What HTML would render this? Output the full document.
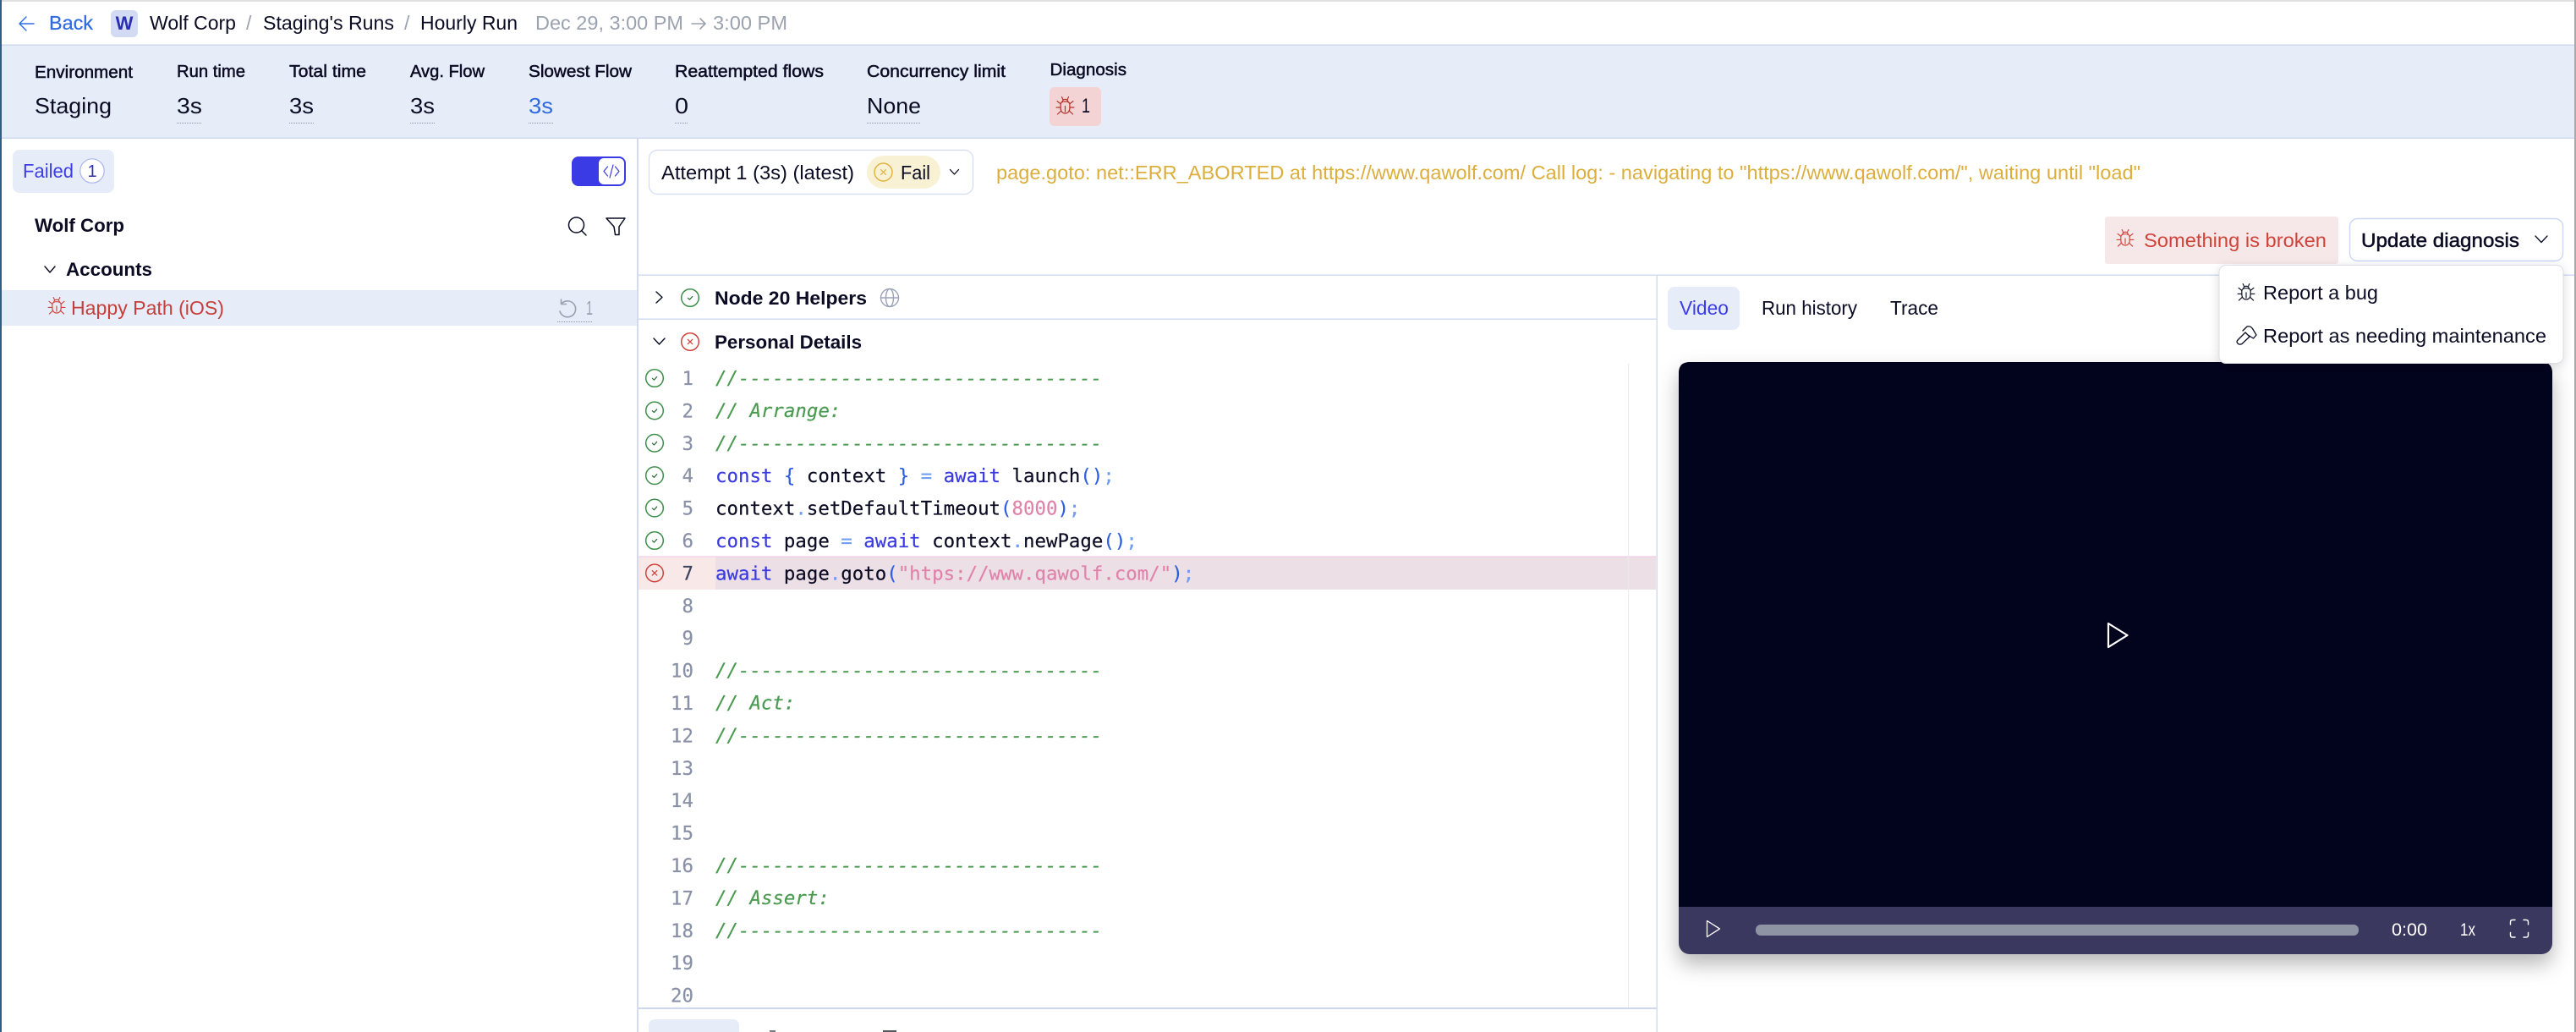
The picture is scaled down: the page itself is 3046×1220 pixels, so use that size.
<!DOCTYPE html>
<html lang="en">
<head>
<meta charset="utf-8">
<title>Hourly Run</title>
<style>
html,body{margin:0;padding:0;background:#fff;width:3046px;height:1220px;overflow:hidden}
svg{display:block}
text{font-family:"Liberation Sans",sans-serif;font-size:23px;fill:#0b0b23;white-space:pre}
.m{stroke:#0b0b23;stroke-width:.5px}
.b{font-weight:bold;font-size:22.5px}
.l{font-size:20px;stroke:#0b0b23;stroke-width:.5px}
.v{font-size:26px}
.c{font-family:"DejaVu Sans Mono",monospace;font-size:22.4px;stroke:#0b0b23;stroke-width:.2px}
.n{fill:#8a91a6;stroke:#8a91a6;text-anchor:end}
.g{fill:#4a9a50;stroke:#4a9a50}
.i{font-style:italic}
.k{fill:#3a3ae0;stroke:#3a3ae0}
.p{fill:#2f5fe0;stroke:#2f5fe0}
.q{fill:#6f9df2;stroke:#6f9df2}
.s{fill:#e083aa;stroke:#e083aa}
.ic{fill:none;stroke:currentColor;stroke-width:1.2;stroke-linecap:round;stroke-linejoin:round}
</style>
</head>
<body>
<svg width="3046" height="1220" viewBox="0 0 3046 1220" xmlns="http://www.w3.org/2000/svg">
<defs>
<symbol id="bug" viewBox="0 0 22 22" overflow="visible">
<g class="ic">
<path d="M5.6 9.5C5.6 7.2 7.5 6 11 6S16.4 7.2 16.4 9.5V14C16.4 17.6 14 20 11 20S5.6 17.6 5.6 14Z"/>
<path d="M11 11.5V18M7.6 6.5C7.6 4.6 9.2 3.4 11 3.4S14.4 4.6 14.4 6.5M7 .6L8.6 4M15 .6L13.4 4M5.6 8.8L1.6 5.6M16.4 8.8L20.4 5.6M5.6 13H.6M16.4 13H21.4M6.2 17L2 21M15.8 17L20 21"/>
</g>
</symbol>
<symbol id="ok" viewBox="0 0 22 22" overflow="visible">
<circle cx="11" cy="11" r="10.3" fill="none" stroke="#3d8f4a" stroke-width="1.5"/>
<path d="M8.4 11.3L10.4 13.2L13.7 9.5" fill="none" stroke="#2f6f3a" stroke-width="1.25" stroke-linecap="round" stroke-linejoin="round"/>
</symbol>
<symbol id="bad" viewBox="0 0 22 22" overflow="visible">
<circle cx="11" cy="11" r="10.3" fill="none" stroke="#d0433b" stroke-width="1.5"/>
<path d="M8.3 8.3L13.7 13.7M13.7 8.3L8.3 13.7" fill="none" stroke="#d0433b" stroke-width="1.25" stroke-linecap="round"/>
</symbol>
<filter id="sh1" x="-10%" y="-10%" width="120%" height="125%"><feDropShadow dx="0" dy="12" stdDeviation="12" flood-color="#000" flood-opacity=".28"/></filter>
<filter id="sh2" x="-10%" y="-20%" width="120%" height="150%"><feDropShadow dx="0" dy="3" stdDeviation="6" flood-color="#000" flood-opacity=".14"/></filter>
</defs>

<!-- window edges -->
<rect x="0" y="0" width="3046" height="2" fill="#e0e0e0"/>

<!-- header -->
<path d="M31 20L23 28L31 36M23 28H40" fill="none" stroke="#2f6be0" stroke-width="1.4" stroke-linecap="round" stroke-linejoin="round"/>
<text x="58" y="35" textLength="52" lengthAdjust="spacingAndGlyphs" style="fill:#2f6be0;stroke:#2f6be0;stroke-width:.25px">Back</text>
<rect x="131" y="12" width="32" height="32" rx="6" fill="#d3daf3"/>
<text x="147" y="35" text-anchor="middle" class="b" style="fill:#2a2fb0;font-size:22px">W</text>
<text x="177" y="35" textLength="102" lengthAdjust="spacingAndGlyphs">Wolf Corp</text>
<text x="291" y="35" style="fill:#9aa1af">/</text>
<text x="311" y="35" textLength="155" lengthAdjust="spacingAndGlyphs">Staging's Runs</text>
<text x="478" y="35" style="fill:#9aa1af">/</text>
<text x="497" y="35" textLength="115" lengthAdjust="spacingAndGlyphs">Hourly Run</text>
<text x="633" y="35" textLength="175" lengthAdjust="spacingAndGlyphs" style="fill:#9ba2b0">Dec 29, 3:00 PM</text>
<path d="M818 28H834M828 22L834 28L828 34" fill="none" stroke="#9ba2b0" stroke-width="1.6" stroke-linecap="round" stroke-linejoin="round"/>
<text x="843" y="35" textLength="88" lengthAdjust="spacingAndGlyphs" style="fill:#9ba2b0">3:00 PM</text>

<!-- stats band -->
<rect x="0" y="53" width="3046" height="110" fill="#e6ecf8"/>
<rect x="0" y="52.5" width="3046" height="1.5" fill="#cfd8f0"/>
<rect x="0" y="162.5" width="3046" height="1.5" fill="#cfd8f0"/>

<text class="l" x="41" y="92" textLength="116" lengthAdjust="spacingAndGlyphs">Environment</text>
<text class="l" x="209" y="91" textLength="81" lengthAdjust="spacingAndGlyphs">Run time</text>
<text class="l" x="342" y="91" textLength="91" lengthAdjust="spacingAndGlyphs">Total time</text>
<text class="l" x="485" y="91" textLength="88" lengthAdjust="spacingAndGlyphs">Avg. Flow</text>
<text class="l" x="625" y="91" textLength="122" lengthAdjust="spacingAndGlyphs">Slowest Flow</text>
<text class="l" x="798" y="91" textLength="176" lengthAdjust="spacingAndGlyphs">Reattempted flows</text>
<text class="l" x="1025" y="91" textLength="164" lengthAdjust="spacingAndGlyphs">Concurrency limit</text>
<text class="l" x="1241.5" y="89" textLength="90.5" lengthAdjust="spacingAndGlyphs">Diagnosis</text>

<text class="v" x="41" y="134" textLength="91" lengthAdjust="spacingAndGlyphs">Staging</text>
<text class="v" x="209" y="134" textLength="30" lengthAdjust="spacingAndGlyphs">3s</text>
<text class="v" x="342" y="134" textLength="29" lengthAdjust="spacingAndGlyphs">3s</text>
<text class="v" x="485" y="134" textLength="29" lengthAdjust="spacingAndGlyphs">3s</text>
<text class="v" x="625" y="134" textLength="29" lengthAdjust="spacingAndGlyphs" style="fill:#2f6be0">3s</text>
<text class="v" x="798" y="134" textLength="16" lengthAdjust="spacingAndGlyphs">0</text>
<text class="v" x="1025" y="134" textLength="64" lengthAdjust="spacingAndGlyphs">None</text>
<g stroke="#8d94a6" stroke-width="1" stroke-dasharray="1 1">
<path d="M209 145.5H239M342 145.5H371M485 145.5H514M625 145.5H654M798 145.5H814M1025 145.5H1089"/>
</g>

<rect x="1241" y="103" width="61" height="46" rx="6" fill="#f3d3d3"/>
<use href="#bug" x="1248" y="114" width="23" height="22" style="color:#b5322b"/>
<text x="1279" y="133" textLength="10" lengthAdjust="spacingAndGlyphs" style="font-size:24px">1</text>

<!-- sidebar -->
<rect x="15" y="177" width="120" height="51" rx="8" fill="#e6ecf8"/>
<text x="27" y="210" textLength="60" lengthAdjust="spacingAndGlyphs" style="fill:#3d3de6">Failed</text>
<circle cx="109" cy="202" r="14.2" fill="#fff" stroke="#aab5ee" stroke-width="1.2"/>
<text x="109" y="209" text-anchor="middle" style="fill:#2f2fb0;font-size:20px">1</text>

<rect x="676" y="185" width="64" height="35" rx="8" fill="#3b3be6"/>
<rect x="708" y="187" width="30" height="31" rx="6" fill="#fff"/>
<path d="M718.5 197L714 202.5L718.5 208M727.5 197L732 202.5L727.5 208M725 195L721 210" fill="none" stroke="#3b3be6" stroke-width="1.2" stroke-linecap="round" stroke-linejoin="round"/>

<text x="41" y="274" textLength="106" lengthAdjust="spacingAndGlyphs" class="b">Wolf Corp</text>
<circle cx="681.5" cy="266" r="9" fill="none" stroke="#0b0b23" stroke-width="1.5"/>
<path d="M688 273L693 278" stroke="#0b0b23" stroke-width="1.5" stroke-linecap="round"/>
<path d="M717 258H739L732 268V277.5H727.5L726 268Z" fill="none" stroke="#0b0b23" stroke-width="1.5" stroke-linejoin="round"/>

<path d="M53 315L59 322L65 315" fill="none" stroke="#0b0b23" stroke-width="1.4" stroke-linecap="round" stroke-linejoin="round"/>
<text x="78" y="326" textLength="102" lengthAdjust="spacingAndGlyphs" class="b">Accounts</text>

<rect x="2" y="343" width="752" height="42" fill="#e6ecf8"/>
<use href="#bug" x="56" y="351" width="22" height="21" style="color:#d0433b"/>
<text x="84" y="372" textLength="181" lengthAdjust="spacingAndGlyphs" style="fill:#c83e3a">Happy Path (iOS)</text>
<path d="M664.5 358.5A9.5 9.5 0 1 1 662 368M663.5 354V359.5H669.5" fill="none" stroke="#9aa1af" stroke-width="1.6" stroke-linecap="round" stroke-linejoin="round"/>
<text x="693" y="372" textLength="8" lengthAdjust="spacingAndGlyphs" style="fill:#9aa1af">1</text>
<path d="M659 380.5H701" stroke="#8d94a6" stroke-width="1" stroke-dasharray="1 1"/>

<!-- panel lines -->
<rect x="753" y="163" width="2" height="1057" fill="#d3dbf3"/>
<rect x="755" y="324.5" width="2291" height="1.5" fill="#d3dbf3"/>
<rect x="755" y="376.5" width="1204" height="1.5" fill="#d3dbf3"/>
<rect x="1958.5" y="325" width="1.5" height="895" fill="#d3dbf3"/>

<!-- attempt bar -->
<rect x="767.5" y="177.5" width="383" height="52" rx="10" fill="#fff" stroke="#d3dbf3" stroke-width="1.2"/>
<text x="782" y="212" textLength="228" lengthAdjust="spacingAndGlyphs">Attempt 1 (3s) (latest)</text>
<rect x="1025" y="184" width="87" height="39" rx="19.5" fill="#f9f1d4"/>
<circle cx="1044.5" cy="203.5" r="10.5" fill="none" stroke="#e0b040" stroke-width="1.4"/>
<path d="M1041.5 200.5L1047.5 206.5M1047.5 200.5L1041.5 206.5" fill="none" stroke="#e0b040" stroke-width="1.2" stroke-linecap="round"/>
<text x="1065" y="212" textLength="35" lengthAdjust="spacingAndGlyphs">Fail</text>
<path d="M1123.5 200.5L1128.5 206L1133.5 200.5" fill="none" stroke="#0b0b23" stroke-width="1.3" stroke-linecap="round" stroke-linejoin="round"/>
<text x="1178" y="212" textLength="1353" lengthAdjust="spacingAndGlyphs" style="fill:#dcae3c">page.goto: net::ERR_ABORTED at https://www.qawolf.com/ Call log: - navigating to "https://www.qawolf.com/", waiting until "load"</text>

<!-- diagnosis -->
<rect x="2489" y="256" width="276" height="56" rx="3" fill="#f6e8e8"/>
<use href="#bug" x="2502" y="271" width="22" height="21" style="color:#d0433b"/>
<text x="2535" y="292" textLength="216" lengthAdjust="spacingAndGlyphs" style="fill:#d0433b">Something is broken</text>
<rect x="2778.5" y="258.5" width="252" height="50" rx="9" fill="#fff" stroke="#cdd7f5" stroke-width="1.4"/>
<text x="2792" y="292" textLength="187" lengthAdjust="spacingAndGlyphs" class="m">Update diagnosis</text>
<path d="M2998 279L3005 286.5L3012 279" fill="none" stroke="#0b0b23" stroke-width="1.3" stroke-linecap="round" stroke-linejoin="round"/>

<!-- code panel headers -->
<path d="M776 345L783 351.5L776 358" fill="none" stroke="#0b0b23" stroke-width="1.4" stroke-linecap="round" stroke-linejoin="round"/>
<use href="#ok" x="805" y="341" width="22" height="22"/>
<text x="845" y="360" textLength="180" lengthAdjust="spacingAndGlyphs" class="b">Node 20 Helpers</text>
<g fill="none" stroke="#9ca3b8" stroke-width="1.4"><circle cx="1052" cy="352" r="10.5"/><ellipse cx="1052" cy="352" rx="4.5" ry="10.5"/><path d="M1041.5 352H1062.5"/></g>

<path d="M773 400L779.5 407L786 400" fill="none" stroke="#0b0b23" stroke-width="1.4" stroke-linecap="round" stroke-linejoin="round"/>
<use href="#bad" x="805" y="393" width="22" height="22"/>
<text x="845" y="412" textLength="174" lengthAdjust="spacingAndGlyphs" class="b">Personal Details</text>

<!-- code -->
<rect x="755" y="658" width="91" height="39" fill="#f8e8e8"/>
<rect x="846" y="658" width="1112" height="39" fill="#ecdfe6"/>
<rect x="755" y="657.5" width="1203" height="1" fill="#f3c3ea"/>
<rect x="1925" y="430" width="1" height="762" fill="#e9e9ef"/>

<use href="#ok" x="763" y="436" width="22" height="22"/>
<use href="#ok" x="763" y="474.4" width="22" height="22"/>
<use href="#ok" x="763" y="512.8" width="22" height="22"/>
<use href="#ok" x="763" y="551.2" width="22" height="22"/>
<use href="#ok" x="763" y="589.6" width="22" height="22"/>
<use href="#ok" x="763" y="628" width="22" height="22"/>
<use href="#bad" x="763" y="666.4" width="22" height="22"/>

<text class="c n" x="820" y="455">1</text>
<text class="c n" x="820" y="493.4">2</text>
<text class="c n" x="820" y="531.8">3</text>
<text class="c n" x="820" y="570.2">4</text>
<text class="c n" x="820" y="608.6">5</text>
<text class="c n" x="820" y="647">6</text>
<text class="c n" x="820" y="685.4" style="fill:#3d4460;stroke:#3d4460">7</text>
<text class="c n" x="820" y="723.8">8</text>
<text class="c n" x="820" y="762.2">9</text>
<text class="c n" x="820" y="800.6">10</text>
<text class="c n" x="820" y="839">11</text>
<text class="c n" x="820" y="877.4">12</text>
<text class="c n" x="820" y="915.8">13</text>
<text class="c n" x="820" y="954.2">14</text>
<text class="c n" x="820" y="992.6">15</text>
<text class="c n" x="820" y="1031">16</text>
<text class="c n" x="820" y="1069.4">17</text>
<text class="c n" x="820" y="1107.8">18</text>
<text class="c n" x="820" y="1146.2">19</text>
<text class="c n" x="820" y="1184.6">20</text>

<text class="c g i" x="846" y="454.6" textLength="457" lengthAdjust="spacing">//--------------------------------</text>
<text class="c g i" x="846" y="493">// Arrange:</text>
<text class="c g i" x="846" y="531.4" textLength="457" lengthAdjust="spacing">//--------------------------------</text>
<text class="c" x="846" y="570.2"><tspan class="k">const</tspan> <tspan class="p">{</tspan> context <tspan class="p">}</tspan> <tspan class="q">=</tspan> <tspan class="k">await</tspan> launch<tspan class="p">()</tspan><tspan class="q">;</tspan></text>
<text class="c" x="846" y="608.6">context<tspan class="q">.</tspan>setDefaultTimeout<tspan class="p">(</tspan><tspan class="s">8000</tspan><tspan class="p">)</tspan><tspan class="q">;</tspan></text>
<text class="c" x="846" y="647"><tspan class="k">const</tspan> page <tspan class="q">=</tspan> <tspan class="k">await</tspan> context<tspan class="q">.</tspan>newPage<tspan class="p">()</tspan><tspan class="q">;</tspan></text>
<text class="c" x="846" y="685.4"><tspan class="k">await</tspan> page<tspan class="q">.</tspan>goto<tspan class="p">(</tspan><tspan class="s">"htps://www.qawolf.com/"</tspan><tspan class="p">)</tspan><tspan class="q">;</tspan></text>
<text class="c g i" x="846" y="800.2" textLength="457" lengthAdjust="spacing">//--------------------------------</text>
<text class="c g i" x="846" y="838.6">// Act:</text>
<text class="c g i" x="846" y="877" textLength="457" lengthAdjust="spacing">//--------------------------------</text>
<text class="c g i" x="846" y="1030.6" textLength="457" lengthAdjust="spacing">//--------------------------------</text>
<text class="c g i" x="846" y="1069">// Assert:</text>
<text class="c g i" x="846" y="1107.4" textLength="457" lengthAdjust="spacing">//--------------------------------</text>

<!-- bottom tabs -->
<rect x="755" y="1191" width="1203.5" height="2" fill="#cdd7f2"/>
<path d="M767 1220V1213Q767 1205 775 1205H866Q874 1205 874 1213V1220Z" fill="#e6ecf8"/>
<rect x="910" y="1218" width="7" height="2" fill="#77777f"/>
<rect x="1044" y="1218" width="16" height="2" fill="#55555f"/>

<!-- video tabs -->
<rect x="1972" y="339" width="85" height="51" rx="8" fill="#e6ecf8"/>
<text x="1986" y="372" textLength="58" lengthAdjust="spacingAndGlyphs" style="fill:#3d3de6">Video</text>
<text x="2083" y="372" textLength="113" lengthAdjust="spacingAndGlyphs">Run history</text>
<text x="2235" y="372" textLength="57" lengthAdjust="spacingAndGlyphs">Trace</text>

<!-- video -->
<g filter="url(#sh1)">
<rect x="1985" y="428" width="1033" height="700" rx="13" fill="#3a3760"/>
</g>
<path d="M1985 1072V441Q1985 428 1998 428H3005Q3018 428 3018 441V1072Z" fill="#02031c"/>
<path d="M2493 737V765L2515.5 751Z" fill="none" stroke="#fff" stroke-width="2.2" stroke-linejoin="round"/>
<path d="M2018.5 1088.5V1107.5L2033.5 1098Z" fill="none" stroke="#fff" stroke-width="1.3" stroke-linejoin="round"/>
<rect x="2076" y="1093" width="713" height="13" rx="6" fill="#8e94a4"/>
<text x="2828" y="1106" textLength="42" lengthAdjust="spacingAndGlyphs" style="fill:#fff;font-size:21px">0:00</text>
<text x="2909" y="1106" textLength="18" lengthAdjust="spacingAndGlyphs" style="fill:#fff;font-size:21px">1x</text>
<path d="M2968.5 1093V1090Q2968.5 1087.5 2971 1087.5H2974M2984 1087.5H2987Q2989.5 1087.5 2989.5 1090V1093M2989.5 1102.5V1105.5Q2989.5 1108 2987 1108H2984M2974 1108H2971Q2968.5 1108 2968.5 1105.5V1102.5" fill="none" stroke="#fff" stroke-width="1.4" stroke-linecap="round"/>

<!-- dropdown -->
<g filter="url(#sh2)">
<rect x="2624" y="313.5" width="407" height="116" rx="8" fill="#fff" stroke="#dcdde3" stroke-width="1"/>
</g>
<use href="#bug" x="2645" y="335" width="22" height="21" style="color:#0b0b23"/>
<text x="2676" y="354" textLength="136" lengthAdjust="spacingAndGlyphs">Report a bug</text>
<path d="M2646 402L2655 393L2660 398L2651 406.5Q2648 408 2646 406Q2644 404 2646 402ZM2652 391L2657 386Q2661 385 2663.5 388.5L2668 396L2664.5 400L2658 396" fill="none" stroke="#0b0b23" stroke-width="1.3" stroke-linejoin="round" stroke-linecap="round"/>
<text x="2676" y="405" textLength="335" lengthAdjust="spacingAndGlyphs">Report as needing maintenance</text>

<!-- screen edges on top -->
<rect x="0" y="0" width="2" height="1220" fill="#2f5f80"/>
<rect x="3044" y="0" width="2" height="1220" fill="#a9a9a9"/>
</svg>
</body>
</html>
